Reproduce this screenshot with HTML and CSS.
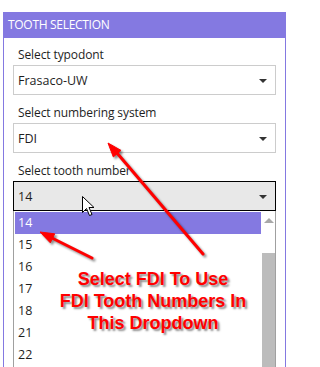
FILE: index.html
```html
<!DOCTYPE html>
<html>
<head>
<meta charset="utf-8">
<link rel="stylesheet" href="styles.css">
</head>
<body>
<div class="panel">
  <div class="panel-header">TOOTH SELECTION</div>
  <div class="panel-body">
    <div class="field">
      <div class="label">Select typodont</div>
      <div class="select"><span>Frasaco-UW</span><span class="caret"></span></div>
    </div>
    <div class="field">
      <div class="label">Select numbering system</div>
      <div class="select"><span>FDI</span><span class="caret"></span></div>
    </div>
    <div class="field">
      <div class="label">Select tooth number</div>
      <div class="select open"><span>14</span><span class="caret"></span></div>
      <div class="listbox">
        <ul class="items">
          <li class="selected">14</li>
          <li>15</li>
          <li>16</li>
          <li>17</li>
          <li>18</li>
          <li>21</li>
          <li>22</li>
        </ul>
        <div class="scrollbar">
          <span class="scroll-up"></span>
          <span class="thumb"></span>
        </div>
      </div>
    </div>
  </div>
</div>

<svg class="cursor" width="14" height="22" viewBox="0 0 14 22">
  <path d="M0.5 0.5 L0.5 16.5 L4.5 12.5 L7.5 19.5 L10 18.5 L7 11.5 L12 11.5 Z" fill="#fff" stroke="#000" stroke-width="1"/>
</svg>

<svg class="arrows" width="290" height="367" viewBox="0 0 290 367">
  <g fill="#ff0000" stroke="#ff0000">
    <line x1="203" y1="254" x2="117" y2="153" stroke-width="3" stroke-linecap="round"/>
    <polygon points="108,143 121,150.4 113.3,156.9" stroke-width="1"/>
    <line x1="92" y1="258" x2="52" y2="238" stroke-width="3" stroke-linecap="round"/>
    <polygon points="40,232 54.7,233.8 50.3,242.8" stroke-width="1"/>
  </g>
</svg>

<div class="note">Select FDI To Use<br>FDI Tooth Numbers In<br>This Dropdown</div>
</body>
</html>
```

FILE: styles.css
```css
html, body {
  margin: 0;
  padding: 0;
  width: 290px;
  height: 367px;
  overflow: hidden;
  background: #fff;
}

body {
  position: relative;
  font-family: "Open Sans", "Noto Sans", sans-serif;
  color: #1e1e1e;
}

.panel {
  margin: 12px 0 0 3px;
  width: 283px;
}

.panel-header {
  height: 26px;
  background: #8479e1;
  color: #fff;
  font-size: 12px;
  line-height: 26px;
  padding-left: 5px;
  letter-spacing: -0.3px;
}

.panel-body {
  box-sizing: border-box;
  border-left: 1px solid #8479e1;
  border-right: 1px solid #8479e1;
  padding: 9px 9px 0 9px;
  height: 329px;
}

.field + .field {
  margin-top: 10px;
}

.label {
  font-size: 12px;
  line-height: 16px;
  height: 16px;
  margin-bottom: 2px;
  padding-left: 5px;
  letter-spacing: -0.1px;
}

.select {
  box-sizing: border-box;
  height: 30px;
  border: 1px solid #cccccc;
  display: flex;
  align-items: center;
  justify-content: space-between;
  padding: 0 8px 0 4px;
  font-size: 12.5px;
  background: #fff;
}

.select.open {
  border-color: #000;
  background: #e8e8e8;
}

.caret {
  width: 0;
  height: 0;
  border-left: 4px solid transparent;
  border-right: 4px solid transparent;
  border-top: 4px solid #333;
  margin-top: 1px;
}

.listbox {
  box-sizing: border-box;
  display: flex;
  border-left: 1px solid #a0a0a0;
  border-right: 1px solid #a0a0a0;
  padding: 1px 0 0 1px;
  height: 156px;
}

.items {
  list-style: none;
  margin: 0;
  padding: 0;
  flex: 1;
  margin-right: 1px;
}

.items li {
  height: 22px;
  line-height: 22px;
  font-size: 12.5px;
  padding-left: 3px;
}

.items li.selected {
  background: #8479e1;
  color: #fff;
}

.scrollbar {
  width: 13px;
  display: flex;
  flex-direction: column;
  align-items: center;
}

.scroll-up {
  margin-top: 6px;
  width: 0;
  height: 0;
  border-left: 5px solid transparent;
  border-right: 5px solid transparent;
  border-bottom: 5px solid #a8a8a8;
}

.thumb {
  margin-top: 30px;
  width: 13px;
  flex: 1;
  background: #bcbcbc;
}

.cursor {
  position: absolute;
  left: 82px;
  top: 196px;
}

.arrows {
  position: absolute;
  left: 0;
  top: 0;
  pointer-events: none;
  filter: drop-shadow(2px 2px 1px rgba(0, 0, 0, 0.45));
}

.note {
  position: absolute;
  left: 40px;
  top: 268px;
  width: 226px;
  text-align: center;
  font-family: "Liberation Sans", Arial, sans-serif;
  font-weight: bold;
  font-size: 18px;
  line-height: 22px;
  color: #ff0000;
  text-shadow: 2px 2px 2px rgba(0, 0, 0, 0.45);
}
```
